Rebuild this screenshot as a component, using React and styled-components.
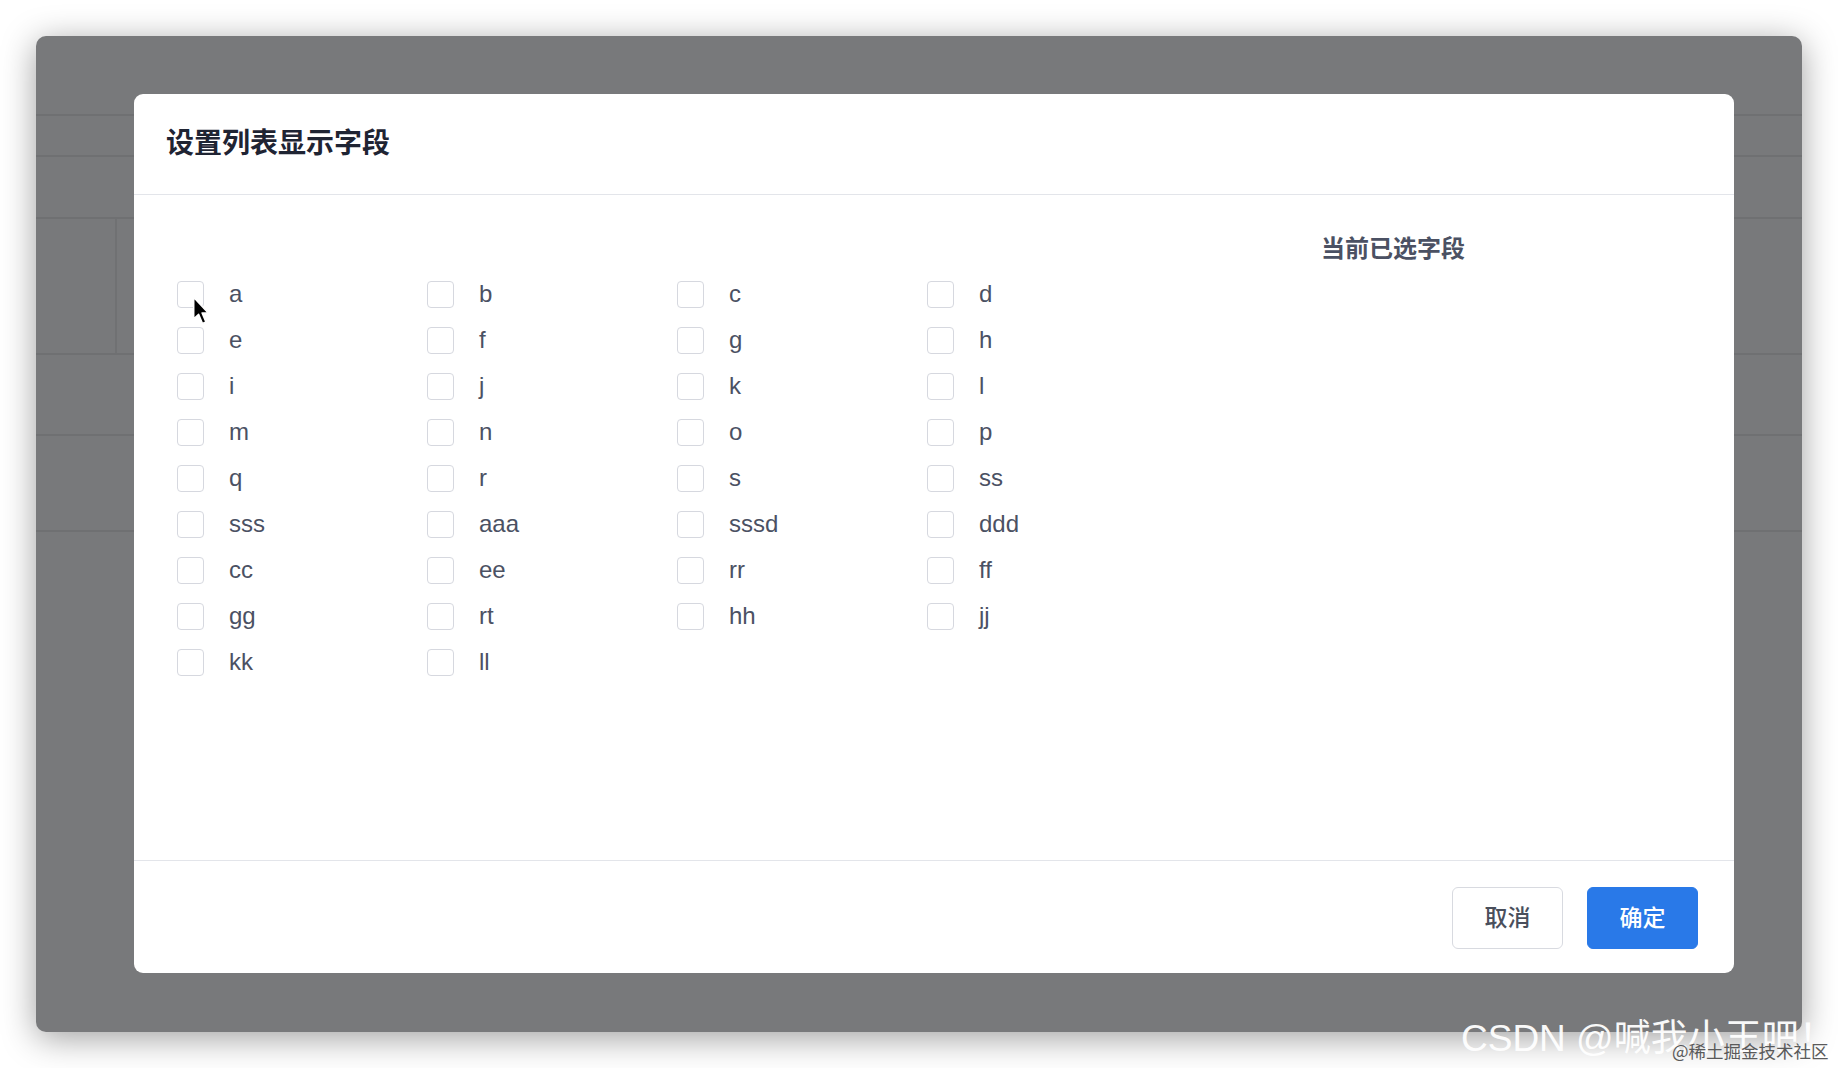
import React from 'react';
import styled, { createGlobalStyle } from 'styled-components';

const fields = [
  'a', 'b', 'c', 'd',
  'e', 'f', 'g', 'h',
  'i', 'j', 'k', 'l',
  'm', 'n', 'o', 'p',
  'q', 'r', 's', 'ss',
  'sss', 'aaa', 'sssd', 'ddd',
  'cc', 'ee', 'rr', 'ff',
  'gg', 'rt', 'hh', 'jj',
  'kk', 'll',
];

// rows of the table behind the overlay
const bgRows = [80, 41, 62, 136, 81, 96];

const GlobalStyle = createGlobalStyle`
  html, body {
    margin: 0;
    padding: 0;
    background: #ffffff;
    overflow: hidden;
  }
  body {
    font-family: "Liberation Sans", "Noto Sans CJK SC", sans-serif;
  }
`;

const Page = styled.div`
  width: 1838px;
  height: 1068px;
  padding: 36px 0 0 36px;
  box-sizing: border-box;
  position: relative;
`;

const Frame = styled.div`
  width: 1766px;
  height: 996px;
  border-radius: 10px;
  background: #78797b;
  box-shadow: 0 6px 34px rgba(0, 0, 0, 0.38);
  position: relative;
  overflow: hidden;
  display: flex;
  flex-flow: column;
`;

const BgRow = styled.div`
  height: ${(p) => p.h}px;
  box-sizing: border-box;
  flex: 0 0 auto;
  border-bottom: 2px solid #6f7072;
  display: flex;
  .cell {
    width: 79px;
    border-right: ${(p) => (p.split ? '2px solid #707173' : 'none')};
  }
`;

const Modal = styled.div`
  position: absolute;
  left: 98px;
  top: 58px;
  width: 1600px;
  height: 879px;
  background: #ffffff;
  border-radius: 9px;
  display: flex;
  flex-flow: column;
  overflow: hidden;
`;

const Header = styled.div`
  height: 94px;
  flex: 0 0 auto;
  display: flex;
  align-items: center;
  padding: 0 0 6px 32px;
  border-bottom: 1px solid #e3e5ea;
  font-family: "Noto Sans CJK SC", sans-serif;
  font-size: 28px;
  line-height: 1;
  font-weight: 700;
  color: #1f2433;
`;

const Body = styled.div`
  height: 665px;
  flex: 0 0 auto;
  display: flex;
  border-bottom: 1px solid #e3e5ea;
`;

const FieldPanel = styled.div`
  width: 1043px;
  box-sizing: border-box;
  padding: 76px 0 0 43px;
  display: grid;
  grid-template-columns: repeat(4, 250px);
  grid-auto-rows: 46px;
  align-content: start;
`;

const Field = styled.label`
  display: flex;
  align-items: center;
  gap: 25px;
  font-size: 24px;
  color: #4b5163;
  position: relative;
`;

const Box = styled.span`
  width: 27px;
  height: 27px;
  box-sizing: border-box;
  border: 1.5px solid #d6d8df;
  border-radius: 4px;
  background: #ffffff;
  flex: 0 0 auto;
`;

const Cursor = styled.svg`
  position: absolute;
  left: 15px;
  top: 25px;
  width: 18px;
  height: 30px;
`;

const SelectedPanel = styled.div`
  padding: 36px 0 0 144px;
`;

const PanelTitle = styled.div`
  font-family: "Noto Sans CJK SC", sans-serif;
  font-size: 24px;
  line-height: 32px;
  font-weight: 700;
  color: #4b5163;
`;

const Footer = styled.div`
  flex: 1;
  display: flex;
  justify-content: flex-end;
  align-items: center;
  gap: 24px;
  padding: 2px 36px 0 0;
`;

const Button = styled.div`
  width: 111px;
  height: 62px;
  box-sizing: border-box;
  border-radius: 6px;
  display: flex;
  justify-content: center;
  align-items: center;
  padding-bottom: 4px;
  font-family: "Noto Sans CJK SC", sans-serif;
  font-size: 23px;
  font-weight: 500;
  border: 1.5px solid ${(p) => (p.primary ? '#2979e8' : '#d8dae0')};
  background: ${(p) => (p.primary ? '#2979e8' : '#ffffff')};
  color: ${(p) => (p.primary ? '#ffffff' : '#4a4f5c')};
`;

const Watermark = styled.div`
  position: absolute;
  left: 1461px;
  top: 1008px;
  white-space: nowrap;
  font-family: "Liberation Sans", "Noto Sans CJK SC", sans-serif;
  font-size: 37px;
  color: #ffffff;
  opacity: 0.95;
`;

const SubMark = styled.div`
  position: absolute;
  left: 1672px;
  top: 1038px;
  white-space: nowrap;
  font-family: "Noto Sans CJK SC", serif;
  font-size: 17.5px;
  color: #5a5a5a;
`;

const App = () => {
  return (
    <Page>
      <GlobalStyle />
      <Frame>
        {bgRows.map((h, i) => (
          <BgRow key={i} h={h} split={i === 3}>
            <div className="cell" />
          </BgRow>
        ))}

        <Modal>
          <Header>设置列表显示字段</Header>
          <Body>
            <FieldPanel>
              {fields.map((f, i) => (
                <Field key={f}>
                  <Box />
                  {f}
                  {i === 0 && (
                    <Cursor viewBox="0 0 17 29">
                      <path
                        d="M1.5 1.5 L1.5 22 L6.2 17.6 L10 26.5 L13.2 25.1 L9.5 16.4 L15.5 16.4 Z"
                        fill="#000"
                        stroke="#fff"
                        strokeWidth="1.4"
                        strokeLinejoin="round"
                      />
                    </Cursor>
                  )}
                </Field>
              ))}
            </FieldPanel>
            <SelectedPanel>
              <PanelTitle>当前已选字段</PanelTitle>
            </SelectedPanel>
          </Body>
          <Footer>
            <Button>取消</Button>
            <Button primary>确定</Button>
          </Footer>
        </Modal>
      </Frame>
      <Watermark>CSDN @喊我小王吧！</Watermark>
      <SubMark>@稀土掘金技术社区</SubMark>
    </Page>
  );
};

export default App;
